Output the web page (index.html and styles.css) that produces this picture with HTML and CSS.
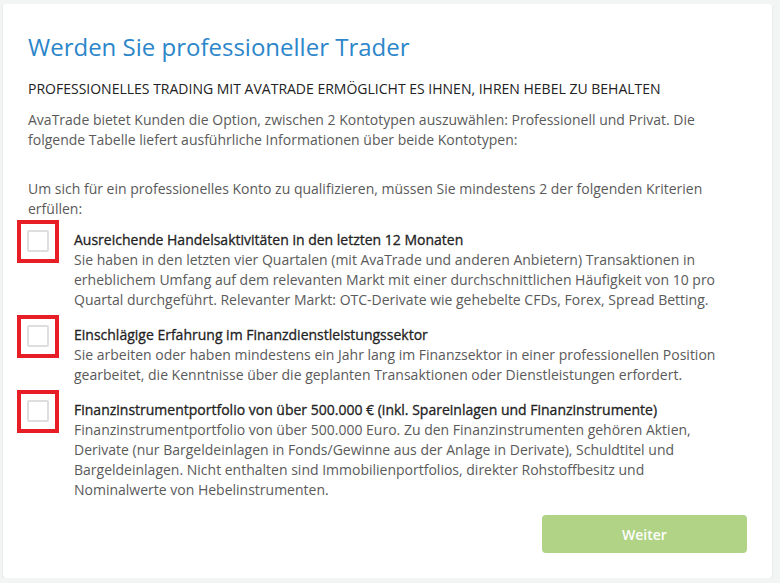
FILE: index.html
```html
<!DOCTYPE html>
<html lang="de">
<head>
  <meta charset="UTF-8" />
  <title>Professioneller Trader</title>
  <link rel="stylesheet" href="styles.css">
</head>
<body>
  <div class="card">
    <h2>Werden Sie professioneller Trader</h2>
    <h4>PROFESSIONELLES TRADING MIT AVATRADE ERMÖGLICHT ES IHNEN, IHREN HEBEL ZU BEHALTEN</h4>

    <p class="intro">AvaTrade bietet Kunden die Option, zwischen 2 Kontotypen auszuwählen: Professionell und Privat. Die folgende Tabelle liefert ausführliche Informationen über beide Kontotypen:</p>

    <p class="criteria">Um sich für ein professionelles Konto zu qualifizieren, müssen Sie mindestens 2 der folgenden Kriterien erfüllen:</p>

    <div class="item">
      <label class="check-wrap"><input type="checkbox" /><span class="box"></span></label>
      <div class="item-text">
        <div class="item-title">Ausreichende Handelsaktivitäten in den letzten 12 Monaten</div>
        Sie haben in den letzten vier Quartalen (mit AvaTrade und anderen Anbietern) Transaktionen in erheblichem Umfang auf dem relevanten Markt mit einer durchschnittlichen Häufigkeit von 10 pro Quartal durchgeführt. Relevanter Markt: OTC-Derivate wie gehebelte CFDs, Forex, Spread Betting.
      </div>
    </div>

    <div class="item">
      <label class="check-wrap"><input type="checkbox" /><span class="box"></span></label>
      <div class="item-text">
        <div class="item-title">Einschlägige Erfahrung im Finanzdienstleistungssektor</div>
        Sie arbeiten oder haben mindestens ein Jahr lang im Finanzsektor in einer professionellen Position gearbeitet, die Kenntnisse über die geplanten Transaktionen oder Dienstleistungen erfordert.
      </div>
    </div>

    <div class="item">
      <label class="check-wrap"><input type="checkbox" /><span class="box"></span></label>
      <div class="item-text">
        <div class="item-title">Finanzinstrumentportfolio von über 500.000 € (inkl. Spareinlagen und Finanzinstrumente)</div>
        Finanzinstrumentportfolio von über 500.000 Euro. Zu den Finanzinstrumenten gehören Aktien, Derivate (nur Bargeldeinlagen in Fonds/Gewinne aus der Anlage in Derivate), Schuldtitel und Bargeldeinlagen. Nicht enthalten sind Immobilienportfolios, direkter Rohstoffbesitz und Nominalwerte von Hebelinstrumenten.
      </div>
    </div>

    <div class="actions">
      <button class="next" disabled>Weiter</button>
    </div>
  </div>
</body>
</html>
```

FILE: styles.css
```css
body {
  margin: 0;
  background: #f3f4f4;
  font-family: "Open Sans", sans-serif;
  font-size: 14px;
  line-height: 20px;
  color: #5a5a5a;
}

.card {
  box-sizing: border-box;
  width: 769px;
  height: 574px;
  margin: 4px 0 0 3px;
  padding: 28px 25px 0 25px;
  background: white;
  border-radius: 3px;
  box-shadow: 0 1px 2px rgba(0,0,0,0.12);
}

h2 {
  margin: 0;
  font-size: 24px;
  line-height: 30px;
  font-weight: 400;
  color: #2c86ca;
}

h4 {
  margin: 17px 0 0;
  font-size: 14px;
  font-weight: 400;
  color: #222;
}

.intro {
  margin: 11px 0 0;
}

.criteria {
  margin: 29px 0 0;
}

.item {
  display: flex;
  gap: 15px;
  margin-top: 15px;
  margin-left: -11px;
  padding-right: 15px;
}

.criteria + .item {
  margin-top: 11px;
}

.check-wrap {
  flex: none;
  width: 42px;
  height: 43px;
  box-sizing: border-box;
  margin-top: -10px;
  padding: 6px;
  border: 4px solid #e81e26;
  cursor: pointer;
}

.check-wrap input {
  display: none;
}

.box {
  display: block;
  width: 22px;
  height: 22px;
  box-sizing: border-box;
  border: 2px solid #dedede;
  border-radius: 2px;
}

/* medium-looking title without widening the glyphs */
.item-title {
  color: #222;
  -webkit-text-stroke: 0.3px #222;
}

.actions {
  display: flex;
  justify-content: flex-end;
  margin-top: 15px;
}

.next {
  width: 205px;
  height: 38px;
  border: none;
  border-radius: 4px;
  background: #b0d385;
  color: white;
  font-family: "Open Sans", sans-serif;
  font-size: 14px;
  font-weight: 600;
}
```
